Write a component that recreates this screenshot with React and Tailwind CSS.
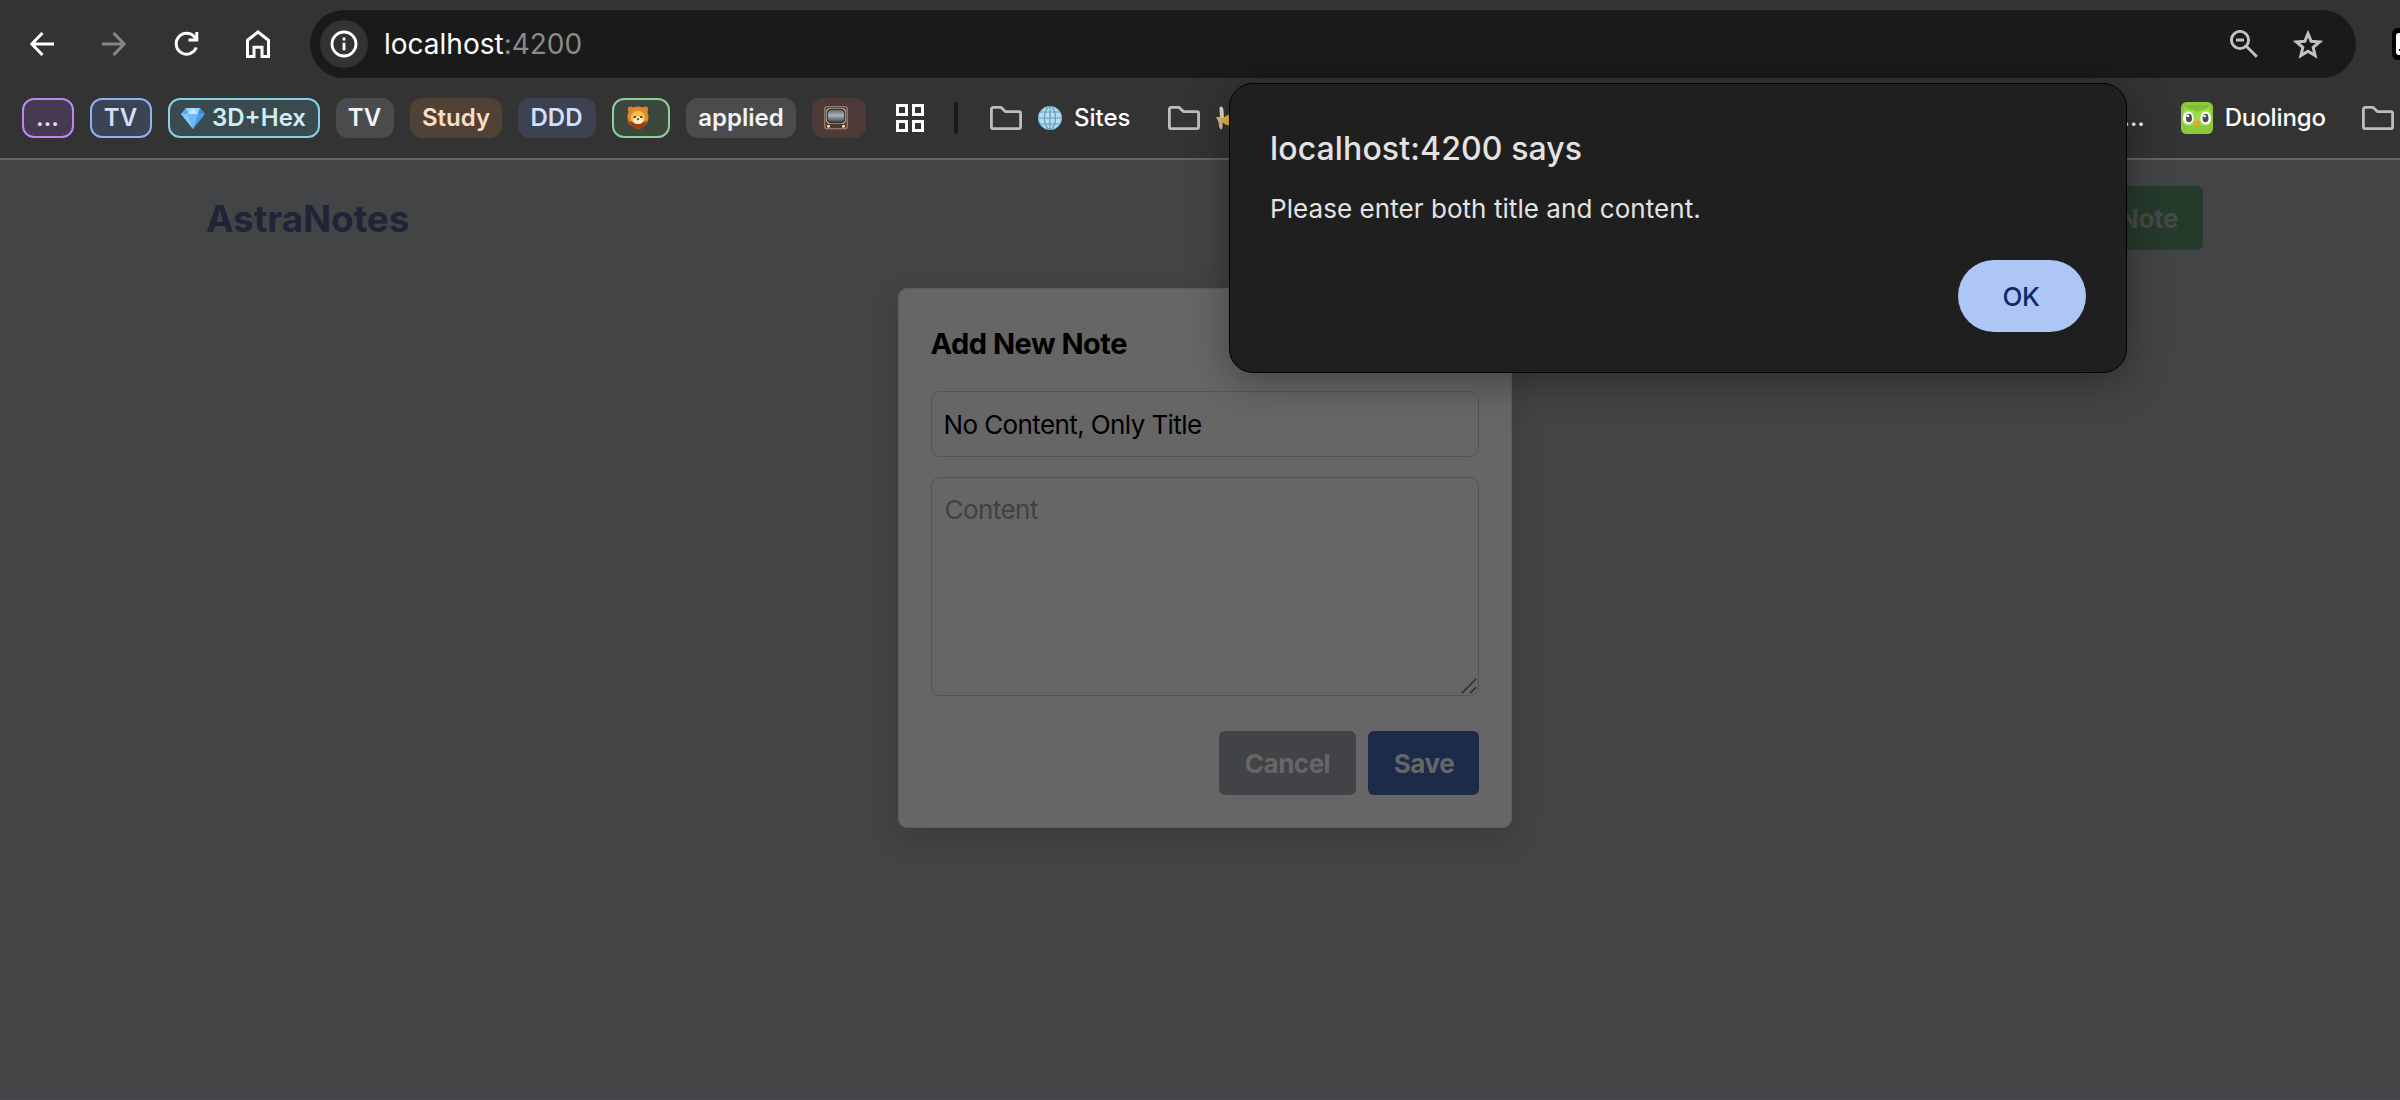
import React from "react";

const BackIcon = ({ className }) => (
  <svg viewBox="0 0 24 24" className={className} fill="none" stroke="currentColor" strokeWidth="3">
    <path d="M24 12H2.5M12.5 1L1.8 12l10.7 11" />
  </svg>
);

const ReloadIcon = () => (
  <svg viewBox="0 0 26 30" className="h-[30px] w-[26px] shrink-0" fill="none" stroke="white" strokeWidth="3">
    <path d="M22.3 18.5A10.400 10.400 0 1 1 20.500 8L23 10.5" />
    <path d="M22.800 3V11H14.5" />
  </svg>
);

const HomeIcon = () => (
  <svg viewBox="0 0 24 28" className="h-7 w-6 shrink-0" fill="none" stroke="white" strokeWidth="3">
    <path d="M1.5 10.2L12 2l10.5 8.2v16.3H16V17.2H8v9.3H1.5z" />
  </svg>
);

const InfoIcon = () => (
  <svg viewBox="0 0 28 28" className="h-7 w-7" fill="none" stroke="white" strokeWidth="2.8">
    <circle cx="14" cy="14" r="12" />
    <path d="M14 12.8v7.4M14 7.6v2.8" />
  </svg>
);

const ZoomOutIcon = () => (
  <svg viewBox="0 0 28 28" className="h-7 w-7" fill="none" stroke="#c2c2c2" strokeWidth="2.9">
    <circle cx="10" cy="10" r="8.6" />
    <path d="M6 10h8M16.3 16.3L26.8 26.8" />
  </svg>
);

const StarIcon = () => (
  <svg viewBox="0 0 30 29" className="h-[29px] w-[30px]" fill="none" stroke="#c2c2c2" strokeWidth="3">
    <path d="M15 3.600l3.200 7.700 8.300.7-6.300 5.400 1.900 8.100-7.100-4.300-7.100 4.300 1.900-8.100L3.500 12l8.300-.7z" />
  </svg>
);

const FolderIcon = () => (
  <svg viewBox="0 0 32 24" className="h-6 w-8 shrink-0" fill="none" stroke="#bdbdbd" strokeWidth="2.8" strokeLinejoin="round">
    <path d="M3 1.4h8.2l4.2 4.2H29a1.6 1.6 0 0 1 1.6 1.6V21a1.6 1.6 0 0 1-1.6 1.6H3A1.6 1.6 0 0 1 1.4 21V3A1.6 1.6 0 0 1 3 1.4z" />
  </svg>
);

const GridIcon = () => (
  <svg viewBox="0 0 28 28" className="h-7 w-7 shrink-0" fill="none" stroke="white" strokeWidth="3">
    <path d="M1.5 1.5h9v9h-9zM17.5 1.5h9v9h-9zM1.5 17.5h9v9h-9zM17.5 17.5h9v9h-9z" />
  </svg>
);

const Gem = () => (
  <svg viewBox="0 0 24 22" className="h-[22px] w-6 shrink-0">
    <path d="M5 1h14l5 6-12 15L0 7z" fill="#4a9fe8" />
    <path d="M5 1h14l-2 6H7z" fill="#9bd2fa" />
    <path d="M7 7h10l-5 15z" fill="#6db9f5" />
    <path d="M0 7h7l5 15z" fill="#8cc9f8" />
    <path d="M5 1L0 7h7z" fill="#5aaaf0" />
    <path d="M19 1l5 6h-7z" fill="#3c8bdc" />
    <path d="M12 1l5 6H7z" fill="#c5e6fd" />
  </svg>
);

const Lion = () => (
  <svg viewBox="0 0 22 24" className="h-6 w-[22px] shrink-0">
    <circle cx="3.6" cy="3.4" r="2.8" fill="#d9822b" />
    <circle cx="18.4" cy="3.4" r="2.8" fill="#d9822b" />
    <path d="M11 .5c6 0 10.5 4.5 10.5 10.5 0 4-2 7-4 9l-2.5 1-1.5 2.200L11 22.600l-2.500.6L7 21l-2.500-1C2 18 .5 15 .5 11 .5 5 5 .5 11 .5z" fill="#e08a2c" />
    <path d="M2 15c1 4 3 6 5 6.500l1.500 1.700 2.500-.8 2.500.8 1.500-1.700c2-.5 4-3 5-6.500l-9 3z" fill="#9a3f16" />
    <ellipse cx="11" cy="11.500" rx="7.200" ry="6.500" fill="#f8c14a" />
    <ellipse cx="11" cy="14.500" rx="5" ry="3.500" fill="#fbeed2" />
    <circle cx="7.800" cy="11" r="1.100" fill="#2b1a12" />
    <circle cx="14.200" cy="11" r="1.100" fill="#2b1a12" />
    <path d="M9.300 12.600h3.400L11 14.600z" fill="#3a2018" />
  </svg>
);

const Television = () => (
  <svg viewBox="0 0 24 24" className="h-6 w-6 shrink-0">
    <defs>
      <linearGradient id="tv-screen" x1="0" y1="0" x2="0" y2="1">
        <stop offset="0" stopColor="#5d686b" />
        <stop offset=".45" stopColor="#aab6b8" />
        <stop offset="1" stopColor="#3a4548" />
      </linearGradient>
    </defs>
    <rect x=".8" y=".8" width="22.400" height="22" rx="2" fill="#54362b" stroke="#a58e78" strokeWidth="1.100" />
    <rect x="2" y="2" width="20" height="16" rx="4.500" fill="#e0d6c6" />
    <rect x="2.600" y="2.600" width="18.800" height="14.800" rx="4.500" fill="#20282b" />
    <rect x="3.800" y="3.800" width="16.400" height="12.400" rx="4" fill="url(#tv-screen)" />
    <circle cx="4.500" cy="20.300" r="1.500" fill="#f0e2c8" />
    <circle cx="19.500" cy="20.300" r="1.500" fill="#f0e2c8" />
  </svg>
);

const Globe = () => (
  <svg viewBox="0 0 24 24" className="h-6 w-6 shrink-0" fill="none" stroke="#5d9fc0" strokeWidth="1.200">
    <circle cx="12" cy="12" r="11.500" fill="#b9dcee" stroke="#7db9d6" />
    <ellipse cx="12" cy="12" rx="5.500" ry="11.500" />
    <path d="M12 .5v23M.5 12h23M2.500 6h19M2.500 18h19" />
  </svg>
);

const Banana = () => (
  <svg viewBox="0 0 24 24" className="h-6 w-6 shrink-0">
    <path d="M3.500 2C4.500-.5 7 .5 7.500 4l.5 8-4 1z" fill="#e6dcc0" />
    <path d="M0 11c3 0 6 0 7 2l-.5 8c-.5 4-3 3-3.500-1l-.5-4z" fill="#d3bf98" />
    <path d="M5 14c3-3 6-6 14-6l3 10c-7 3-14 2-17-4z" fill="#e9b93a" />
  </svg>
);

const DuolingoIcon = () => (
  <svg viewBox="0 0 32 32" className="h-8 w-8 shrink-0">
    <rect width="32" height="32" rx="5.5" fill="#8ac93a" />
    <path d="M4 4.500c2 2.500 5 3.500 8 4l4 2.500 4-2.500c3-.5 6-1.500 8-4l2 8v8c-2 4-8 4-14 1-6 3-12 3-14-1v-8z" fill="#9fdc4a" />
    <path d="M5 4c1 3 5 4 11 4s10-1 11-4l1-1H4z" fill="#80bf35" />
    <ellipse cx="7.300" cy="16" rx="5.300" ry="6.600" fill="white" />
    <ellipse cx="24.700" cy="16" rx="5.300" ry="6.600" fill="white" />
    <ellipse cx="8" cy="16" rx="3" ry="4.300" fill="#4b4b4b" />
    <ellipse cx="24.500" cy="16" rx="3" ry="4.300" fill="#4b4b4b" />
    <circle cx="7" cy="14" r="1.300" fill="white" />
    <circle cx="23.500" cy="14" r="1.300" fill="white" />
    <path d="M12.500 20.500c1-2.500 6-2.500 7 0L16 25z" fill="#f49a2a" />
  </svg>
);

const ExtensionIcon = () => (
  <svg viewBox="0 0 32 32" className="absolute left-[2392px] top-7 h-8 w-8">
    <rect width="32" height="32" rx="6" fill="black" />
    <rect x="4" y="5" width="24" height="22" rx="3" fill="white" />
    <path d="M7 22h1.5" stroke="black" strokeWidth="2" />
  </svg>
);

const chip = "flex h-10 shrink-0 items-center justify-center rounded-[12px]";

export default function App() {
  return (
    <div className="relative flex h-[1100px] w-[2400px] flex-col overflow-hidden bg-[#434446] font-['Inter',sans-serif]">
      <header className="flex h-40 shrink-0 flex-col border-b-2 border-[#626362] bg-[#333333]">
        <div className="flex h-[78px] items-center pl-[30px] pt-[10px]">
          <div className="flex items-center gap-12">
            <BackIcon className="h-6 w-6 text-white" />
            <BackIcon className="h-6 w-6 rotate-180 text-[#868686]" />
            <div className="-mr-0.5"><ReloadIcon /></div>
            <HomeIcon />
          </div>
          <div className="ml-10 flex h-[68px] w-[2046px] items-center rounded-full bg-[#1a1a1a] pl-[10px] pr-[33px]">
            <span className="flex h-12 w-12 items-center justify-center rounded-full bg-[#333333]"><InfoIcon /></span>
            <span className="ml-4 text-[28px] leading-10 text-white">localhost<span className="text-[#8a8a8a]">:4200</span></span>
            <div className="ml-auto flex items-center gap-[35px]">
              <ZoomOutIcon />
              <StarIcon />
            </div>
          </div>
        </div>

        <div className="flex h-20 items-center pl-[22px] pr-[6px] text-[24px] leading-8">
          <div className="flex gap-4 font-semibold">
            <span className={`${chip} w-[52px] border-2 border-[#b98af5] bg-[#463a50] pr-px text-[#e9cffb]`}>…</span>
            <span className={`${chip} w-[62px] border-2 border-[#8fb0f5] bg-[#3c4352] pr-px text-[#d3defb]`}>TV</span>
            <span className={`${chip} w-[152px] gap-[7px] border-2 border-[#86d3e8] bg-[#3b4a4e] pr-px text-[#cdeef5]`}><Gem />3D+Hex</span>
            <span className={`${chip} w-[58px] bg-[#4a4b4d] pr-px text-[#f1f3f4]`}>TV</span>
            <span className={`${chip} w-[92px] bg-[#4f4235] text-[#fcdcc5]`}>Study</span>
            <span className={`${chip} w-[78px] bg-[#3c4252] pr-px text-[#d3defb]`}>DDD</span>
            <span className={`${chip} w-[58px] border-2 border-[#8dce9b] bg-[#3c483e] pr-[6px]`}><Lion /></span>
            <span className={`${chip} w-[110px] bg-[#4a4b4d] text-[#f1f3f4]`}>applied</span>
            <span className={`${chip} w-[54px] bg-[#4d3a38] pr-[6px]`}><Television /></span>
          </div>
          <div className="ml-[30px]"><GridIcon /></div>
          <div className="ml-[30px] h-8 w-1 rounded-full bg-[#1a1a1a]" />
          <div className="ml-8 flex items-center gap-[37px] font-medium text-white">
            <span className="flex items-center"><FolderIcon /><span className="ml-4 mr-3"><Globe /></span>Sites</span>
            <span className="flex items-center"><FolderIcon /><span className="ml-4"><Banana /></span></span>
          </div>
          <div className="ml-auto flex items-center gap-9 font-medium text-white">
            <span>…</span>
            <span className="flex items-center gap-3 tracking-[-0.1px]"><DuolingoIcon />Duolingo</span>
            <FolderIcon />
          </div>
        </div>
      </header>
      <ExtensionIcon />

      <main className="flex flex-1 flex-col border-b border-[#4a464b] pl-[206px] pr-[197px] pt-[26px]">
        <div className="flex h-16 items-center justify-between">
          <h1 className="pt-0.5 text-[37px] font-bold leading-[44px] tracking-[-0.1px] text-[#1d2537]">AstraNotes</h1>
          <button className="h-16 rounded-[6px] bg-[#243a2b] px-[25px] text-[26px] font-bold tracking-[-0.4px] text-[#474849]">Add Note</button>
        </div>

        <section className="mt-[38px] flex h-[540px] w-[614px] flex-col self-center rounded-[9px] border border-[#5c5d5f] bg-[#666666] p-8 shadow-[0_10px_30px_rgba(0,0,0,0.15)]">
          <h2 className="pt-px text-[29px] font-bold leading-[44px] tracking-[-0.5px] text-black">Add New Note</h2>
          <div className="mt-[25px] flex h-[66px] shrink-0 items-center rounded-[9px] border border-[#535456] pl-3 pt-px text-[26px] tracking-[-0.6px] text-black">No Content, Only Title</div>
          <div className="relative mt-5 h-[219px] shrink-0 rounded-[9px] border border-[#535456] pl-[13px] pt-3 text-[26px] leading-10 tracking-[-0.55px] text-[#404145]">
            Content
            <svg viewBox="0 0 16 16" className="absolute bottom-px right-px h-4 w-4" fill="none" stroke="#2c2c2c" strokeWidth="1.5">
              <path d="M.8 15.3L15.2.8M9 15.3l6.2-6.2" />
            </svg>
          </div>
          <div className="mt-[35px] flex h-16 shrink-0 justify-end gap-3 text-[26px] font-bold text-[#666666]">
            <button className="w-[137px] rounded-[6px] bg-[#424347] pl-px pt-px tracking-[-0.5px]">Cancel</button>
            <button className="w-[111px] rounded-[6px] bg-[#1d2b4b] pl-0.5 pt-px tracking-[-0.5px]">Save</button>
          </div>
        </section>
      </main>

      <div role="alertdialog" className="absolute left-[1229px] top-[83px] flex h-[290px] w-[898px] flex-col rounded-[24px] border border-black bg-[#1f1f1f] px-[40px] pb-10 pt-[45px] text-[#e3e3e3] shadow-[0_8px_40px_rgba(0,0,0,0.35)]">
        <h3 className="text-[32px] font-medium leading-10 tracking-[0.12px]">localhost:4200 says</h3>
        <p className="mt-6 text-[26px] leading-8 tracking-[0.06px]">Please enter both title and content.</p>
        <button className="mt-auto h-[72px] w-32 self-end rounded-full bg-[#aec6f6] pr-0.5 text-[26px] font-medium tracking-[-0.3px] text-[#10296b]">OK</button>
      </div>
    </div>
  );
}
